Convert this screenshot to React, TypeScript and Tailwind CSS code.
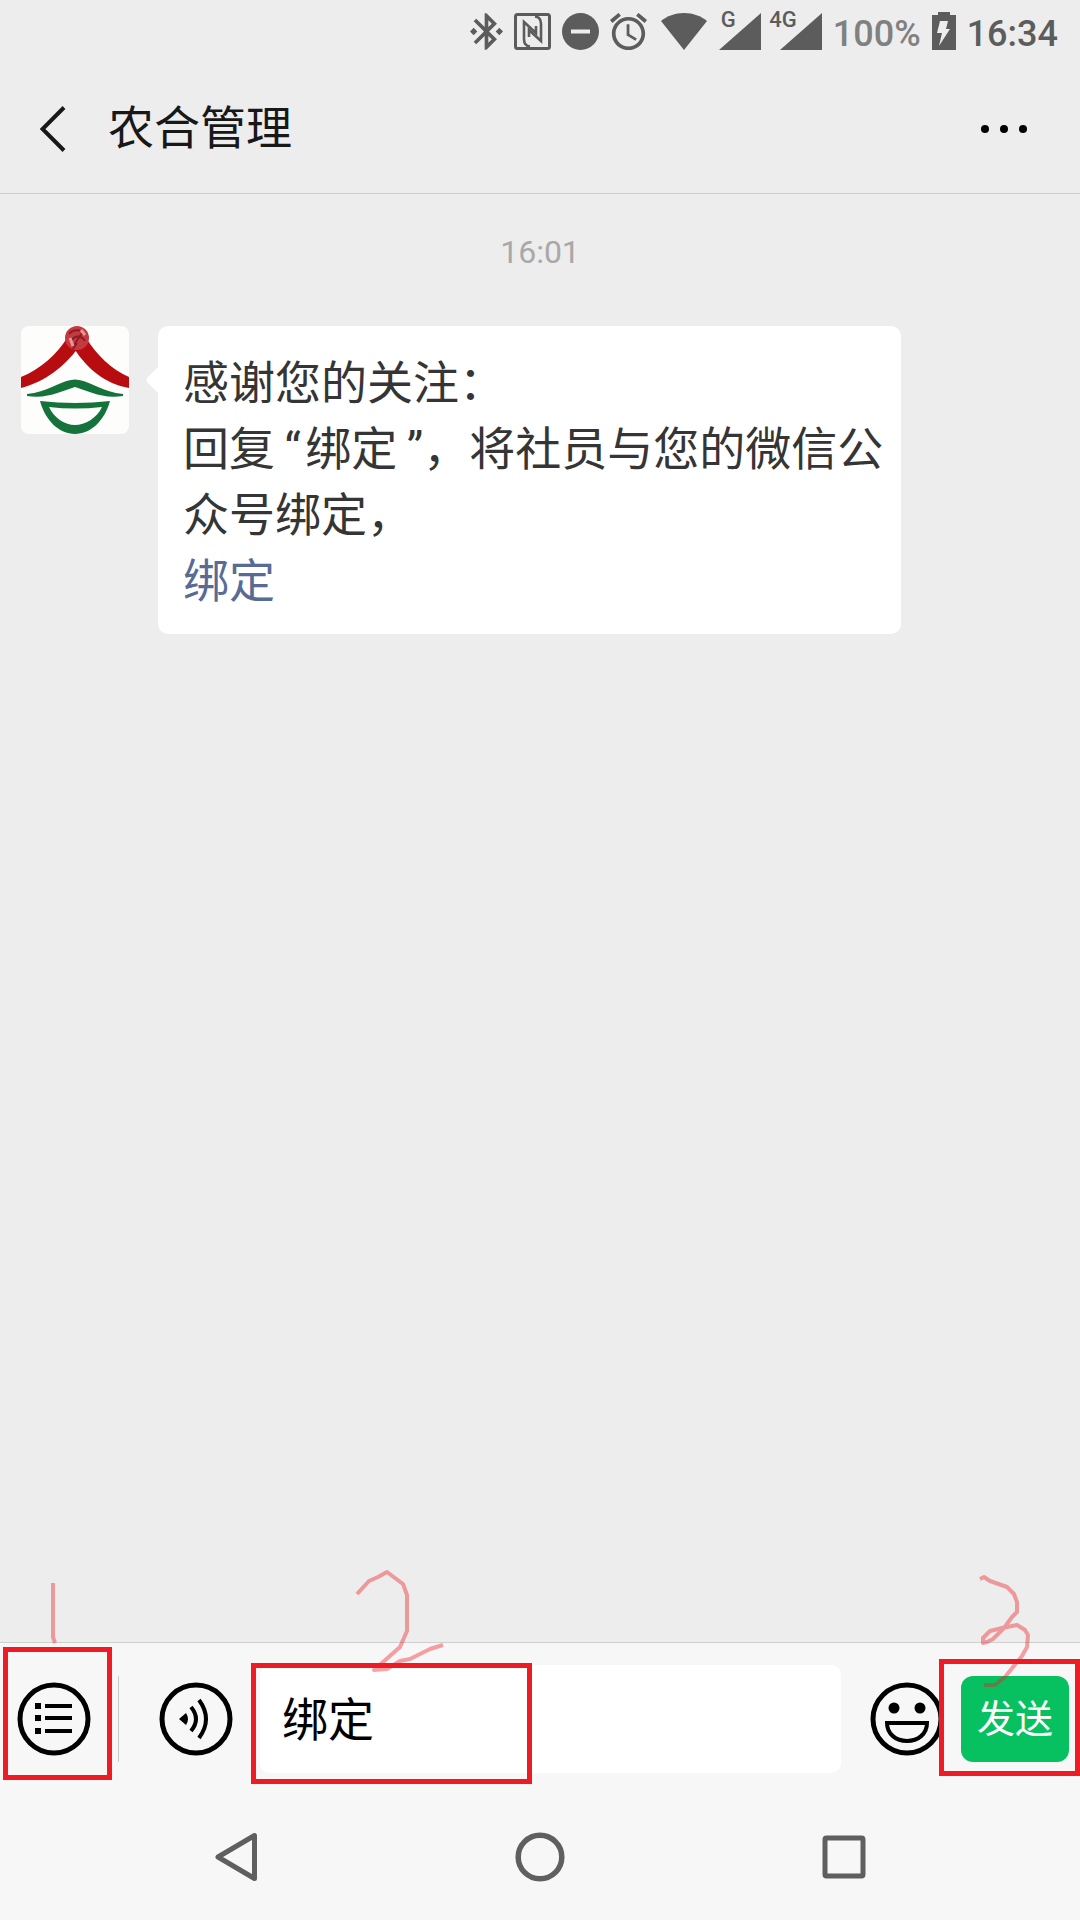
import React, { useState } from "react";

const BluetoothIcon = () => (
  <svg viewBox="3 2 18 20" className="h-[37px] w-[33px]" fill="currentColor">
    <path d="M17.71 7.71L12 2h-1v7.59L6.41 5 5 6.41 10.59 12 5 17.59 6.41 19 11 14.41V22h1l5.71-5.71-4.3-4.29 4.3-4.29zM13 5.83l1.88 1.88L13 9.59V5.83zm1.88 10.46L13 18.17v-3.76l1.88 1.88z" />
    <path d="M7 12l-2-2-2 2 2 2zM19 10l-2 2 2 2 2-2z" />
  </svg>
);

const NfcIcon = () => (
  <svg viewBox="0 0 37 37" className="size-[37px]" fill="none" stroke="currentColor">
    <rect x="1.5" y="1.5" width="34" height="34" rx="2" strokeWidth="3" />
    <path d="M16 33.5C11 33 10 30 10 26V9L22 20V13" strokeWidth="2.6" />
    <path d="M21 3.5C26 4 27 7 27 11V28L15 17V24" strokeWidth="2.6" />
  </svg>
);

const DoNotDisturbIcon = () => (
  <svg viewBox="0 0 37 37" className="size-[37px]">
    <circle cx="18.5" cy="18.5" r="18.5" fill="currentColor" />
    <rect x="9" y="16.5" width="19" height="4" fill="#ededed" />
  </svg>
);

const AlarmIcon = () => (
  <svg viewBox="2 1.9 20 20" className="size-[37px]" fill="currentColor">
    <path d="M22 5.72l-4.6-3.86-1.29 1.53 4.6 3.86L22 5.72zM7.88 3.39L6.6 1.86 2 5.71l1.29 1.53 4.59-3.85zM12.5 8H11v6l4.75 2.85.75-1.23-4-2.37V8zM12 4c-4.97 0-9 4.03-9 9s4.02 9 9 9c4.97 0 9-4.03 9-9s-4.03-9-9-9zm0 16c-3.87 0-7-3.13-7-7s3.13-7 7-7 7 3.13 7 7-3.13 7-7 7z" />
  </svg>
);

const WifiIcon = () => (
  <svg viewBox="0 0 46 37" className="h-[37px] w-[46px]" fill="currentColor">
    <path d="M23 37 L0 8 C6 3 14 0 23 0 C32 0 40 3 46 8 Z" />
  </svg>
);

const BatteryIcon = () => (
  <svg viewBox="0 0 24 38" className="h-[38px] w-6">
    <path d="M6 0h12v3h6v35H0V3h6z" fill="currentColor" />
    <path d="M8 9h8l-2 8h4L7 34l3-13H5z" fill="#ededed" />
  </svg>
);

const Signal = ({ label }: { label: string }) => (
  <div className="relative flex justify-end">
    <span className="absolute right-[25px] bottom-5 text-[22px] leading-5 font-medium">{label}</span>
    <svg viewBox="0 0 42 37" className="h-[37px] w-[42px]" fill="currentColor">
      <path d="M42 0v37H0z" />
    </svg>
  </div>
);

const StatusBar = () => (
  <div className="flex h-16 items-end justify-end gap-[11px] pr-[22px] pb-[14px] text-[#5c5c5c]">
    <BluetoothIcon />
    <NfcIcon />
    <DoNotDisturbIcon />
    <AlarmIcon />
    <div className="flex gap-3 pl-[3px]">
      <WifiIcon />
      <Signal label="G" />
    </div>
    <div className="pl-2">
      <Signal label="4G" />
    </div>
    <span className="text-4xl leading-8 font-medium text-[#808080]">100%</span>
    <BatteryIcon />
    <span className="text-4xl leading-8 font-medium">16:34</span>
  </div>
);

const Header = () => (
  <header className="flex h-[130px] items-center border-b border-[#d0d0d0] pr-[53px] pl-10 text-[#181818]">
    <button type="button" aria-label="返回">
      <svg viewBox="0 0 26 46" className="h-[46px] w-[26px]" fill="none" stroke="currentColor" strokeWidth="4">
        <path d="M24 1.5 2.5 23 24 44.5" />
      </svg>
    </button>
    <h1 className="ml-[42px] flex-1 pb-0.5 text-[46px] leading-[66px]">农合管理</h1>
    <button type="button" aria-label="更多" className="text-black">
      <svg viewBox="0 0 46 8" className="h-2 w-[46px]" fill="currentColor">
        <circle cx="4" cy="4" r="4" />
        <circle cx="23" cy="4" r="4" />
        <circle cx="42" cy="4" r="4" />
      </svg>
    </button>
  </header>
);

const Avatar = () => (
  <svg viewBox="0 0 108 108" className="size-[108px] shrink-0 rounded-lg bg-[#fdfdfb]">
    <path d="M0 51 C20 43 36 28 46 12 L57 22 C44 40 24 56 0 62 Z" fill="#b80d10" />
    <path d="M108 51 C90 43 76 29 65 12 L54 24 C66 42 84 58 108 62 Z" fill="#b80d10" />
    <circle cx="56" cy="12" r="12" fill="#c53a40" />
    <path d="M48 8c4-5 12-5 16 0M50 15c4-6 10-6 14 0M53 19l8-12M52 23l4-6" fill="none" stroke="#8e1c24" strokeWidth="2" />
    <path d="M60 4l4 5M49 12l3 8" stroke="#ee9499" strokeWidth="3" />
    <path d="M6 68 C26 66 38 56 50 54 Q54 53 58 54 C70 56 82 66 102 68 L102 70 C80 73 68 65 54 61 C40 65 28 73 6 70 Z" fill="#14733a" />
    <path
      d="M19 75 Q54 79 89 75 C84 94 70 108 54 108 C38 108 24 94 19 75 Z M28 81 C33 92 44 99 54 99 C64 99 76 92 81 81 Q54 84 28 81 Z"
      fill="#14733a"
      fillRule="evenodd"
    />
  </svg>
);

const Message = () => (
  <div className="flex items-start pr-[179px] pl-[21px]">
    <Avatar />
    <div className="relative ml-[29px] flex-1 rounded-[10px] bg-white pt-6 pr-4 pb-5 pl-[25px] text-[46px] leading-[66px] text-[#353535]">
      <svg viewBox="0 0 13 28" className="absolute top-10 -left-3 h-7 w-[13px]" fill="#fff">
        <path d="M13 0 L2 11 Q-1 14 2 17 L13 28 Z" />
      </svg>
      <p>{"感谢您的关注\uff1a"}</p>
      <p>{"回复\u2009“\u200a绑定\u2009”\uff0c将社员与您的微信公众号绑定\uff0c"}</p>
      <a href="#bind" className="text-[#576b95]">
        绑定
      </a>
    </div>
  </div>
);

const ListIcon = () => (
  <svg viewBox="0 0 74 74" className="size-[74px]">
    <circle cx="37" cy="37" r="34" fill="none" stroke="currentColor" strokeWidth="5" />
    <path d="M18 21h6v6h-6zM18 33h6v6h-6zM18 46h6v6h-6zM28 22h27v4H28zM28 34h27v4H28zM28 47h27v4H28z" fill="currentColor" />
  </svg>
);

const VoiceIcon = () => (
  <svg viewBox="0 0 74 74" className="size-[74px]" fill="none" stroke="currentColor">
    <circle cx="37" cy="37" r="34" strokeWidth="5" />
    <path d="M20 37l7-6q4 6 0 12z" fill="currentColor" stroke="none" />
    <path d="M32 25q10 12 0 24M40 18q14 19 0 38" strokeWidth="4" />
  </svg>
);

const SmileIcon = () => (
  <svg viewBox="0 0 74 74" className="size-[74px]">
    <circle cx="37" cy="37" r="34" fill="none" stroke="currentColor" strokeWidth="5" />
    <circle cx="24" cy="26" r="5.5" fill="currentColor" />
    <circle cx="50" cy="26" r="5.5" fill="currentColor" />
    <path d="M17 41h40c0 11-9 18-20 18s-20-7-20-18z" fill="none" stroke="currentColor" strokeWidth="4" />
  </svg>
);

// Hand-drawn step number placed above a highlighted control
const Scribble = ({ d, className }: { d: string; className: string }) => (
  <svg
    className={`pointer-events-none absolute overflow-visible ${className}`}
    fill="none"
    stroke="#ed1c24"
    strokeOpacity="0.4"
    strokeWidth="4"
    strokeLinejoin="round"
  >
    <path d={d} />
  </svg>
);

const Composer = () => {
  const [text, setText] = useState("绑定");

  return (
    <form
      className="flex items-center border-t border-[#cfcfcf] bg-[#f7f7f7] pt-[22px] pr-[11px] pb-[21px] pl-[17px] text-black"
      onSubmit={(e) => e.preventDefault()}
    >
      <div className="relative">
        <button type="button" aria-label="菜单" className="block">
          <ListIcon />
        </button>
        <div className="pointer-events-none absolute -top-[35px] -left-[14px] h-[133px] w-[109px] border-5 border-[#ed1c24]" />
        <Scribble className="-top-[99px] left-[34px] h-[60px] w-2" d="M2 0V54L4 60" />
      </div>

      <div className="ml-[27px] h-[86px] w-px bg-[#c8c8c8]" />

      <button type="button" aria-label="语音" className="ml-10">
        <VoiceIcon />
      </button>

      <div className="relative ml-[27px] flex-1">
        <input
          type="text"
          aria-label="消息"
          value={text}
          onChange={(e) => setText(e.target.value)}
          className="block h-[108px] w-full rounded-[10px] bg-white px-[22px] pb-1.5 text-[46px] outline-none"
        />
        <div className="pointer-events-none absolute -top-0.5 -left-[9px] h-[121px] w-[281px] border-5 border-[#ed1c24]" />
        <Scribble
          className="-top-[93px] left-[97px] h-[98px] w-[86px]"
          d="M0 22L12 9 21 5 30 0 38 6 46 12 50 23V59L43 75 26 90 17 98 30 97 43 89 53 87 73 77 86 73"
        />
      </div>

      <button type="button" aria-label="表情" className="ml-[29px]">
        <SmileIcon />
      </button>

      <div className="relative ml-[17px]">
        <button type="submit" className="block h-[86px] w-[108px] rounded-xl bg-[#07c160] text-[38px] text-white">
          发送
        </button>
        <div className="pointer-events-none absolute -top-[17px] -right-[11px] h-[117px] w-[141px] border-5 border-[#ed1c24]" />
        <Scribble
          className="-top-[99px] left-[19px] h-[108px] w-12"
          d="M0 2L4 0 10 4 27 10 34 17 37 25V35L32 40 24 51 13 62 7 65 3 66V61L10 54 22 51 37 48 45 53 48 58 47 70 42 79 25 100 15 108 4 108"
        />
      </div>
    </form>
  );
};

const NavBar = () => (
  <nav className="flex h-[126px] items-center justify-between bg-[#f7f7f7] pr-[214px] pl-[215px] text-[#5f5f5f]">
    <button type="button" aria-label="后退">
      <svg viewBox="0 0 43 50" className="h-[50px] w-[43px]" fill="none" stroke="currentColor" strokeWidth="5" strokeLinejoin="round">
        <path d="M39.5 3.5V46.5L3 25Z" />
      </svg>
    </button>
    <button type="button" aria-label="主页">
      <svg viewBox="0 0 50 50" className="size-[50px]" fill="none" stroke="currentColor" strokeWidth="5.5">
        <circle cx="25" cy="25" r="21.8" />
      </svg>
    </button>
    <button type="button" aria-label="最近任务">
      <svg viewBox="0 0 44 44" className="size-11" fill="none" stroke="currentColor" strokeWidth="5">
        <rect x="3" y="3" width="38" height="38" rx="1.5" />
      </svg>
    </button>
  </nav>
);

const App = () => (
  <div
    lang="zh-CN"
    className="flex min-h-screen flex-col bg-[#ededed] font-[Roboto,'Noto_Sans_CJK_SC',sans-serif]"
  >
    <StatusBar />
    <Header />
    <main className="flex-1">
      <time className="mt-8 mb-12 block text-center text-[32px] leading-[52px] text-[#a8a8a8]">16:01</time>
      <Message />
    </main>
    <Composer />
    <NavBar />
  </div>
);

export default App;
